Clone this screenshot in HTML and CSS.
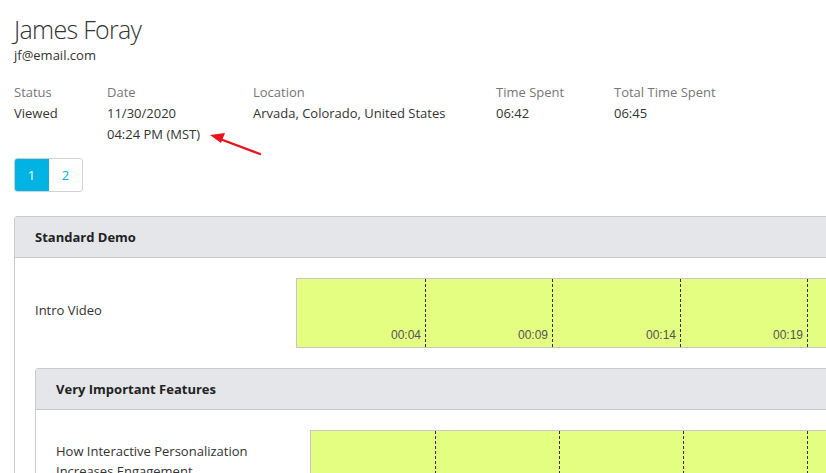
FILE: index.html
```html
<!DOCTYPE html>
<html>
<head>
<meta charset="utf-8">
<link rel="stylesheet" href="styles.css">
</head>
<body>
<div class="page">
  <h1 class="name">James Foray</h1>
  <div class="email">jf@email.com</div>

  <div class="info">
    <div class="col c-status"><div class="lbl">Status</div><div class="val">Viewed</div></div>
    <div class="col c-date"><div class="lbl">Date</div><div class="val">11/30/2020<br>04:24 PM (MST)</div></div>
    <div class="col c-loc"><div class="lbl">Location</div><div class="val">Arvada, Colorado, United States</div></div>
    <div class="col c-time"><div class="lbl">Time Spent</div><div class="val">06:42</div></div>
    <div class="col c-total"><div class="lbl">Total Time Spent</div><div class="val">06:45</div></div>
    <svg class="arrow" width="60" height="30" viewBox="0 0 60 30">
      <line x1="54" y1="25" x2="14" y2="10" stroke="#e8141a" stroke-width="2.4" stroke-linecap="round"/>
      <polygon points="4,6 19,4 15,14" fill="#e8141a"/>
    </svg>
  </div>

  <div class="pager">
    <span class="pg active">1</span><span class="pg">2</span>
  </div>

  <div class="panel outer">
    <div class="panel-head">Standard Demo</div>
    <div class="panel-body">
      <div class="row">
        <div class="row-label l1">Intro Video</div>
        <div class="timeline">
          <div class="seg" style="width:128px"><span>00:04</span></div>
          <div class="seg" style="width:126px"><span>00:09</span></div>
          <div class="seg" style="width:127px"><span>00:14</span></div>
          <div class="seg" style="width:126px"><span>00:19</span></div>
          <div class="seg" style="width:126px"></div>
        </div>
      </div>

      <div class="panel inner">
        <div class="panel-head">Very Important Features</div>
        <div class="panel-body">
          <div class="row">
            <div class="row-label l2">How Interactive Personalization Increases Engagement</div>
            <div class="timeline">
              <div class="seg" style="width:124px"></div>
              <div class="seg" style="width:123px"></div>
              <div class="seg" style="width:123px"></div>
              <div class="seg" style="width:123px"></div>
              <div class="seg" style="width:123px"></div>
            </div>
          </div>
        </div>
      </div>
    </div>
  </div>
</div>
</body>
</html>
```

FILE: styles.css
```css
html, body {
  margin: 0;
  padding: 0;
  overflow: hidden;
  background: #fff;
}
body {
  font-family: "Open Sans", "Noto Sans", sans-serif;
  font-size: 13px;
  color: #333;
}
.page {
  padding: 12px 0 0 14px;
  width: 1000px;
}
.name {
  margin: 0;
  font-size: 25px;
  font-weight: 300;
  line-height: 34px;
  color: #333;
  letter-spacing: -0.7px;
}
.email {
  line-height: 18px;
  margin-top: 0;
}
.info {
  position: relative;
  display: flex;
  margin-top: 18px;
  line-height: 21px;
}
.lbl {
  color: #777;
}
.val {
  color: #333;
}
.c-status { width: 93px; }
.c-date { width: 146px; }
.c-loc { width: 243px; }
.c-time { width: 118px; }
.c-total { width: 150px; }
.arrow {
  position: absolute;
  left: 192px;
  top: 47px;
}
.pager {
  display: flex;
  margin-top: 13px;
  width: max-content;
  border: 1px solid #cfd3d8;
  border-radius: 3px;
  overflow: hidden;
}
.pg {
  display: flex;
  align-items: center;
  justify-content: center;
  height: 32px;
  width: 33px;
  color: #00b3e3;
  font-size: 13px;
}
.pg.active {
  background: #00b3e3;
  color: #fff;
  width: 35px;
  margin: -1px 0 -1px -1px;
  height: 34px;
}
.panel {
  border: 1px solid #c8cacf;
  border-radius: 3px 0 0 0;
  background: #fff;
}
.outer {
  margin-top: 24px;
}
.panel-head {
  height: 40px;
  line-height: 40px;
  background: #e5e6ea;
  border-bottom: 1px solid #c8cacf;
  padding-left: 20px;
  font-weight: 700;
  color: #222;
  font-size: 13px;
}
.panel-body {
  padding: 20px 0 20px 20px;
}
.row {
  display: flex;
  align-items: center;
}
.row-label {
  flex: none;
  line-height: 20px;
  color: #333;
  padding-bottom: 6px;
}
.l1 { width: 261px; }
.l2 { width: 234px; padding-right: 20px; padding-bottom: 8px; }
.timeline {
  display: flex;
  height: 68px;
  border: 1px solid #c6c6c6;
  background: #e4fe82;
  flex: 1;
}
.seg {
  flex: none;
  height: 100%;
  border-right: 1px dashed #333;
  display: flex;
  align-items: flex-end;
  justify-content: flex-end;
  box-sizing: content-box;
}
.seg span {
  font-family: "Liberation Sans", Arial, sans-serif;
  font-size: 12px;
  color: #555;
  padding: 0 4px 5px 0;
}
.inner {
  margin-top: 20px;
}
```
